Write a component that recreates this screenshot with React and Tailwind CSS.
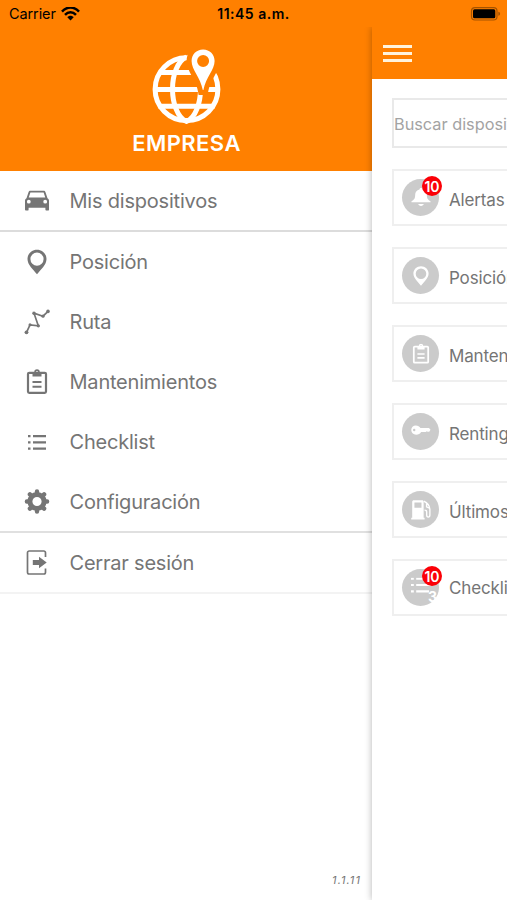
const CarIcon = () => (
    <svg viewBox="0 0 26 26" className="w-[26px] h-[26px]" fill="currentColor">
        <path
            fillRule="evenodd"
            d="M6.4 2.8h13.200c.9 0 1.500.5 1.800 1.300l2.100 6.100c.9.6 1.500 1.400 1.500 2.600v8.600c0 .8-.5 1.200-1.200 1.200h-1.200c-.8 0-1.200-.5-1.200-1.200v-1.600H4.600v1.600c0 .8-.5 1.200-1.200 1.200H2.200c-.7 0-1.200-.5-1.200-1.200v-8.600c0-1.200.6-2 1.500-2.600l2.100-6.100c.3-.8.9-1.300 1.800-1.300zM6.400 4.400 4.700 9.500h16.600L19.600 4.400zM4.800 11.800a1.900 1.900 0 1 0 0 3.800a1.900 1.900 0 1 0 0-3.800zM21.200 11.800a1.900 1.900 0 1 0 0 3.800a1.900 1.900 0 1 0 0-3.800z"
        />
    </svg>
);

const PinIcon = () => (
    <svg viewBox="0 0 26 26" className="w-[26px] h-[26px]" fill="currentColor">
        <path
            fillRule="evenodd"
            d="M13 .8C7.700.8 3.500 4.800 3.500 10c0 5.800 5.500 10.300 9.500 15.200C17 20.300 22.500 15.800 22.500 10 22.500 4.800 18.300.8 13 .8zM13 3.500a6.600 6.600 0 1 1 0 13.200a6.600 6.600 0 1 1 0-13.200z"
        />
    </svg>
);

const RouteIcon = () => (
    <svg viewBox="0 0 26 26" className="w-[26px] h-[26px]" fill="currentColor">
        <path d="M2.500 23.300 6 15.800l8.300 1L10 4.200l9 3 5-4.800" fill="none" stroke="currentColor" strokeWidth="1.700" />
        <circle cx="2.500" cy="23.300" r="1.900" />
        <circle cx="6" cy="15.800" r="1.500" />
        <circle cx="14.300" cy="16.800" r="1.600" />
        <circle cx="10" cy="4.200" r="1.700" />
        <circle cx="19" cy="7.200" r="1.600" />
        <circle cx="24" cy="2.400" r="1.800" />
    </svg>
);

const ClipboardIcon = () => (
    <svg viewBox="0 0 26 26" className="w-[26px] h-[26px]" fill="none" stroke="currentColor">
        <rect x="4" y="3.800" width="18" height="20" rx="1.200" strokeWidth="2.200" />
        <path d="M8.500 3.500h9v4h-9z" fill="currentColor" stroke="none" />
        <circle cx="13" cy="3" r="1.900" strokeWidth="1.700" />
        <path d="M8.500 13h9M8.500 17.800h9" strokeWidth="2" />
    </svg>
);

const ListIcon = () => (
    <svg viewBox="0 0 26 26" className="w-[26px] h-[26px]" stroke="currentColor" strokeWidth="2.300">
        <path d="M4 7.200h2.500M4 13.400h2.500M4 19.600h2.500M9 7.200h13M9 13.400h13M9 19.600h13" />
    </svg>
);

const GearIcon = () => (
    <svg viewBox="0 0 26 26" className="w-[26px] h-[26px]" fill="none" stroke="currentColor">
        <circle cx="13" cy="12.500" r="7.100" strokeWidth="5" />
        <path
            d="M13 2.400v2M13 20.600v2M2.900 12.500h2M21.100 12.500h2M5.900 5.400l1.400 1.400M18.700 18.200l1.400 1.400M20.100 5.400l-1.400 1.400M7.300 18.200l-1.400 1.400"
            strokeWidth="4.400"
            strokeLinecap="round"
        />
    </svg>
);

const LogoutIcon = () => (
    <svg viewBox="0 0 26 26" className="w-[26px] h-[26px]" fill="none" stroke="currentColor">
        <path d="M21.500 7V2.700a1.700 1.700 0 0 0-1.700-1.700H5.200a1.700 1.700 0 0 0-1.700 1.700v19.600a1.700 1.700 0 0 0 1.700 1.700h14.600a1.700 1.700 0 0 0 1.700-1.700V18.500" strokeWidth="1.700" />
        <path d="M8.800 10h6.200V6.800l7.700 5.700-7.700 5.700V15H8.800z" fill="currentColor" stroke="none" />
    </svg>
);

const BellIcon = () => (
    <svg viewBox="0 0 26 26" className="w-[26px] h-[26px]" fill="currentColor">
        <path d="M13 .4c1.100 0 1.900.8 1.900 1.900 3.600.9 5.400 3.500 5.400 6.800 0 4.600 1.400 5.700 4.700 8.200v1H1v-1c3.300-2.500 4.700-3.600 4.700-8.200 0-3.300 1.800-5.900 5.400-6.800 0-1.100.8-1.900 1.900-1.900zM9.500 20.600h7c-.4 1.500-1.600 2.300-3.500 2.300s-3.100-.8-3.500-2.300z" />
    </svg>
);

const KeyIcon = () => (
    <svg viewBox="0 0 26 26" className="w-[26px] h-[26px]" fill="currentColor">
        <path
            fillRule="evenodd"
            d="M6.500 4.900c2.700 0 4.700 1.200 5.800 3h10.700l1.900 2.300-1.600 2.500h-1.900l-1.200-.7-1.400.9h-5.700c-1.100 2.200-3.400 3.400-6.200 3.400C3.200 16.300.8 13.900.8 10.600s2.400-5.700 5.700-5.700zM4.500 9a1.500 1.500 0 1 0 0 3a1.500 1.500 0 1 0 0-3z"
        />
    </svg>
);

const FuelIcon = () => (
    <svg viewBox="0 0 26 26" className="w-[26px] h-[26px]" fill="currentColor">
        <path fillRule="evenodd" d="M4 .8h10.400c1.100 0 1.900.8 1.900 1.900v20h1.200v2.300H.8v-2.300H2V2.700C2 1.600 2.900.8 4 .8zM4.800 3.600v6.600h8.800V3.600z" />
        <path
            d="M16.400 2c4 1.900 7.300 5 7.700 10v7.400c0 3.300-4 3.300-4 0v-4c0-1.400-.9-2.200-2.700-2.200M20 5v4l3.500 1.800"
            fill="none"
            stroke="currentColor"
            strokeWidth="1.700"
        />
    </svg>
);

const BigListIcon = () => (
    <svg viewBox="0 0 26 26" className="w-[26px] h-[26px]" stroke="currentColor" strokeWidth="2.700">
        <path d="M.5 1.400h3.500M.5 9.300h3.500M.5 17.200h3.500M7 1.400h18M7 9.300h18M7 17.200h16" />
    </svg>
);

const GlobeLogo = () => (
    <svg viewBox="150.500 48 72 76" className="w-[72px] h-[76px]">
        <g fill="none" stroke="white" strokeWidth="5">
            <circle cx="187" cy="89.200" r="31.400" />
            <path d="M187 57c-9 4-14 18-14 32s5 29 14 32.500c9-3.500 14-18.500 14-32.500s-5-28-14-32" strokeWidth="5" />
            <path d="M161 72.500h53M155 89.500h64M159 106.300h56" strokeWidth="5" />
        </g>
        <path
            d="M203.600 49.500c-6.700 0-11.500 5-11.500 11.500 0 9 8.800 16 11.200 29h.6c2.400-13 11.200-20 11.200-29 0-6.500-4.800-11.500-11.500-11.500z"
            fill="#ff8000"
            stroke="#ff8000"
            strokeWidth="10"
        />
        <path
            fillRule="evenodd"
            d="M203.600 49.500c-6.700 0-11.500 5-11.500 11.500 0 9 8.800 16 11.200 29h.6c2.400-13 11.200-20 11.200-29 0-6.500-4.800-11.500-11.500-11.500zM203.600 55a6 6 0 1 1 0 12a6 6 0 1 1 0-12z"
            fill="white"
        />
    </svg>
);

const WifiIcon = () => (
    <svg viewBox="0 0 19 14" className="w-[19px] h-[14px]" fill="none" stroke="black" strokeWidth="2.500">
        <path d="M1 4.600C6-.8 13-.8 18 4.600M4 7.900c3.300-3.500 7.700-3.500 11 0" />
        <path d="M6.300 10.300c1.900-2 4.500-2 6.400 0L9.500 13.500z" fill="black" stroke="none" />
    </svg>
);

const BatteryIcon = () => (
    <svg viewBox="0 0 31 14" className="w-[31px] h-[14px]">
        <rect x="1.500" y=".6" width="25.500" height="12.400" rx="3.500" fill="none" stroke="#a55300" strokeWidth="1.200" />
        <rect x="3" y="2.300" width="22.300" height="9" rx="1.500" fill="black" />
        <path d="M28.300 4.800v4c1.300-.4 1.800-1.200 1.800-2S29.600 5.200 28.300 4.800z" fill="#a55300" />
    </svg>
);

const menu = [
    { label: 'Mis dispositivos', icon: CarIcon, row: 'h-[61px] border-b-2 border-[#dcdcdc]' },
    { label: 'Posición', icon: PinIcon, row: 'h-[60px]' },
    { label: 'Ruta', icon: RouteIcon, row: 'h-[60px]' },
    { label: 'Mantenimientos', icon: ClipboardIcon, row: 'h-[60px]' },
    { label: 'Checklist', icon: ListIcon, row: 'h-[60px]' },
    { label: 'Configuración', icon: GearIcon, row: 'h-[61px] border-b-2 border-[#e0e0e0]' },
    { label: 'Cerrar sesión', icon: LogoutIcon, row: 'h-[61px] border-b-2 border-[#f3f3f3]' },
];

const cards = [
    { label: 'Alertas', icon: BellIcon, badge: 10 },
    { label: 'Posición', icon: PinIcon },
    { label: 'Mantenimientos', icon: ClipboardIcon },
    { label: 'Renting', icon: KeyIcon },
    { label: 'Últimos', icon: FuelIcon },
    { label: 'Checklist', icon: BigListIcon, badge: 10, extra: 3 },
];

const StatusBar = () => (
    <div className="h-[27px] shrink-0 bg-[#ff8000] grid grid-cols-3 items-center pl-[9px] pr-[6px] text-black">
        <div className="flex items-center gap-[5px]">
            <span className="text-[14.5px] tracking-[-0.1px]">Carrier</span>
            <WifiIcon />
        </div>
        <span className="-ml-[3px] text-center text-[14px] font-semibold tracking-[0.5px] whitespace-nowrap">11:45 a.m.</span>
        <div className="flex justify-end">
            <BatteryIcon />
        </div>
    </div>
);

const Drawer = () => (
    <aside className="w-[372px] shrink-0 flex flex-col bg-white">
        <div className="h-[144px] shrink-0 bg-[#ff8000] flex flex-col items-center pt-[21px]">
            <GlobeLogo />
            <h1 className="mt-[6px] ml-[1px] text-[22px] leading-[26px] font-semibold tracking-[0.45px] text-white">EMPRESA</h1>
        </div>
        <nav>
            {menu.map(({ label, icon: Icon, row }) => (
                <div key={label} className={`flex items-center pl-6 gap-[19.5px] text-[#757575] ${row}`}>
                    <Icon />
                    <span className="text-[20px] tracking-[-0.21px]">{label}</span>
                </div>
            ))}
        </nav>
        <span className="mt-auto mb-[12px] mr-[11px] self-end text-[11px] leading-4 italic tracking-[1.1px] text-[#757575]">1.1.11</span>
    </aside>
);

const Card = ({ label, icon: Icon, badge, extra }) => (
    <div className="h-[57px] w-[300px] border-2 border-[#efefef] flex items-center pl-2 gap-[10px]">
        <div className="relative w-[37px] h-[37px] rounded-full bg-[#cbcbcb] text-white flex items-center justify-center">
            <div className="scale-[0.8]">
                <Icon />
            </div>
            {extra && <span className="absolute right-[2px] bottom-px text-[14px] leading-4 font-bold">{extra}</span>}
            {badge && (
                <span className="absolute -top-[3px] -right-[3px] w-5 h-5 rounded-full bg-[#fb0007] flex items-center justify-center text-[14px] font-semibold">
                    {badge}
                </span>
            )}
        </div>
        <span className={`text-[17px] tracking-[-0.15px] text-[#757575] ${extra ? 'pt-[2px]' : 'pt-[6px]'}`}>{label}</span>
    </div>
);

const Content = () => (
    <main className="flex-1 min-w-0 overflow-hidden bg-white">
        <div className="h-[52px] bg-[#ff8000] flex items-center pl-[11px]">
            <div className="flex flex-col gap-[4px]">
                <span className="w-[29px] h-[3px] bg-[#fff3dc]" />
                <span className="w-[29px] h-[3px] bg-[#fff3dc]" />
                <span className="w-[29px] h-[3px] bg-[#fff3dc]" />
            </div>
        </div>
        <div className="pl-[20px] pt-[19px]">
            <div className="h-[50px] w-[300px] border-2 border-[#e9e9e9] flex items-center pt-[3px] text-[16.3px] text-[#a3a3a3]">
                Buscar dispositivo
            </div>
            <div className="mt-[21px] flex flex-col gap-[21px]">
                {cards.map((card) => (
                    <Card key={card.label} {...card} />
                ))}
            </div>
        </div>
    </main>
);

const App = () => {
    return (
        <div className="w-[507px] h-[900px] flex flex-col overflow-hidden bg-white font-['Inter',sans-serif]">
            <StatusBar />
            <div className="flex-1 flex overflow-hidden">
                <Drawer />
                <div className="relative flex-1 min-w-0 flex shadow-[0_0_7px_rgba(0,0,0,0.3)]">
                    <Content />
                </div>
            </div>
        </div>
    );
};

export default App;
